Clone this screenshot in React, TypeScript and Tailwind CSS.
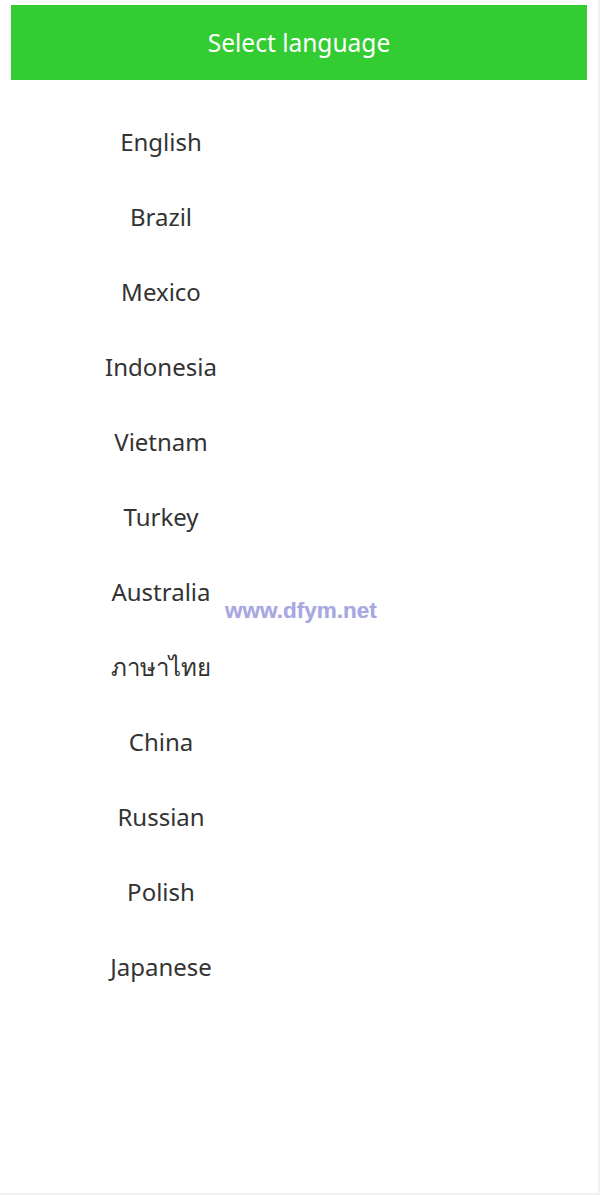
const languages = [
  "English",
  "Brazil",
  "Mexico",
  "Indonesia",
  "Vietnam",
  "Turkey",
  "Australia",
  "ภาษาไทย",
  "China",
  "Russian",
  "Polish",
  "Japanese",
];

const App = () => {
  return (
    <div className="w-[600px] h-[1195px] bg-[#f2f2f2]">
      <div className="relative w-[598px] h-[1193px] bg-white pt-[5px] font-['Noto_Sans','Noto_Sans_CJK_SC',sans-serif]">
        <div className="mx-[11px] h-[75px] pt-[2px] bg-[#33cc33] flex items-center justify-center text-white text-[24.5px]">
          Select language
        </div>

        <ul className="w-[300px] ml-[11px] pt-[24px]">
          {languages.map((lang) => (
            <li
              key={lang}
              className="h-[75px] flex items-center justify-center text-[24px] text-[#333333] cursor-pointer"
            >
              {lang}
            </li>
          ))}
        </ul>

        <span className="absolute left-[225px] top-[594px] text-[22.5px] font-bold text-[#a8a8e0] font-['Liberation_Sans',sans-serif] [text-shadow:0_0_1px_#d8d8f4]">
          www.dfym.net
        </span>
      </div>
    </div>
  );
};

export default App;
